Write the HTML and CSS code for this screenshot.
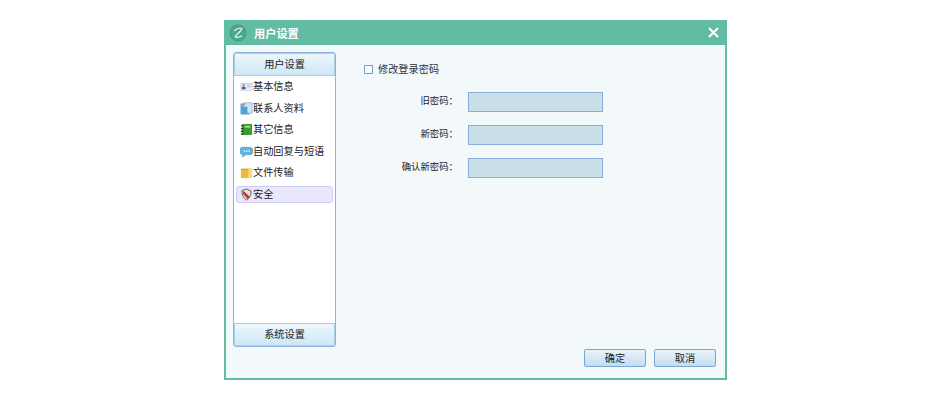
FILE: index.html
```html
<!DOCTYPE html>
<html lang="zh-CN">

<head>
  <meta charset="UTF-8" />
  <title>用户设置</title>
  <link rel="stylesheet" href="styles.css">
</head>

<body>
  <div class="dialog">
    <!-- Title bar -->
    <div class="titlebar">
      <svg class="logo" width="18" height="18" viewBox="0 0 18 18">
        <circle cx="9" cy="9" r="8.5" fill="#3f9c85" />
        <circle cx="9" cy="9" r="7.500" fill="#4ba88f" />
        <path d="M5.500 6.500C7.500 5 11 4 12.500 4.500C13.500 5.200 9.500 9 6.500 12C5.500 13.800 9 13.800 12.500 12" fill="none" stroke="#eef8f5" stroke-width="1.200" stroke-linecap="round" />
      </svg>
      <span class="title">用户设置</span>
      <svg class="close" width="11" height="11" viewBox="0 0 11 11">
        <path d="M1 1L10 10M10 1L1 10" stroke="#fff" stroke-width="2" />
      </svg>
    </div>

    <div class="content">
      <!-- Left menu -->
      <div class="sidebar">
        <div class="side-header">用户设置</div>
        <ul class="menu">
          <li class="menu-item">
            <svg class="icon" viewBox="0 0 14 14">
              <rect x="1" y="3.500" width="12" height="7.500" fill="#e8f0f7" stroke="#a9bccd" stroke-width=".6" />
              <circle cx="4" cy="6" r="1.300" fill="#c9744f" />
              <rect x="2" y="7.500" width="4" height="2.500" fill="#41679a" />
              <path d="M7.500 5.500h4M7.500 7.500h4" stroke="#b3c4d4" />
            </svg>
            基本信息
          </li>
          <li class="menu-item">
            <svg class="icon" viewBox="0 0 14 14">
              <rect x="1" y="2" width="9" height="11" fill="#6fb7e4" stroke="#3f8cc0" stroke-width=".6" />
              <rect x="4" y="1" width="9" height="11" fill="#cfe6f5" stroke="#5ba0cf" stroke-width=".6" />
              <rect x="1" y="5" width="7" height="8" fill="#4fa3d9" />
              <circle cx="4.500" cy="2.500" r="1.200" fill="#e08a3a" />
            </svg>
            联系人资料
          </li>
          <li class="menu-item">
            <svg class="icon" viewBox="0 0 14 14">
              <rect x="2" y="1" width="11" height="12" rx="1" fill="#3c9a35" />
              <rect x="5" y="3" width="6" height="2" fill="#a9dd7c" />
              <path d="M1 3h3M1 6h3M1 9h3M1 12h3" stroke="#1d4f1a" stroke-width="1.200" />
            </svg>
            其它信息
          </li>
          <li class="menu-item">
            <svg class="icon" viewBox="0 0 14 14">
              <path d="M4 2.500h6a3.500 3.500 0 0 1 0 8H6L3 13V10.300A3.500 3.500 0 0 1 4 2.500Z" fill="#5fb2e3" stroke="#3b8cc2" stroke-width=".6" />
              <path d="M4 6.500h1.500M6.500 6.500H8M9 6.500h1.500" stroke="#fff" stroke-width="1.400" />
            </svg>
            自动回复与短语
          </li>
          <li class="menu-item">
            <svg class="icon" viewBox="0 0 14 14">
              <rect x="1" y="3" width="12" height="10" fill="#f0b73c" />
              <rect x="9" y="2" width="4" height="11" fill="#f7d98a" />
              <path d="M1 3h8v1H1z" fill="#d9952a" />
            </svg>
            文件传输
          </li>
          <li class="menu-item selected">
            <svg class="icon" viewBox="0 0 14 14">
              <path d="M2 3L7 1L12 3.500C12 8 10 11 7 13C4 11 2 8 2 3Z" fill="#e9e4de" stroke="#4d4844" stroke-width=".9" />
              <path d="M3.500 3L10.500 9.500L8.500 12L3 6Z" fill="#b5382a" />
            </svg>
            安全
          </li>
        </ul>
        <div class="side-header">系统设置</div>
      </div>

      <!-- Password form -->
      <div class="panel">
        <label class="check-row"><span class="checkbox"></span><span class="check-text">修改登录密码</span></label>
        <div class="form">
          <div class="form-row"><span class="form-label">旧密码：</span><span class="field"></span></div>
          <div class="form-row"><span class="form-label">新密码：</span><span class="field"></span></div>
          <div class="form-row"><span class="form-label">确认新密码：</span><span class="field"></span></div>
        </div>
        <div class="buttons">
          <button class="btn">确定</button>
          <button class="btn">取消</button>
        </div>
      </div>
    </div>
  </div>
</body>

</html>
```

FILE: styles.css
```css
body {
  margin: 0;
  background-color: #fff;
  font-family: "Noto Sans CJK SC", "Liberation Sans", sans-serif;
  font-size: 10.200px;
  color: #222;
}

.dialog {
  box-sizing: border-box;
  width: 503px;
  height: 360px;
  margin: 20px 0 0 224px;
  border: 2px solid #62bca3;
  border-top: 0;
  display: flex;
  flex-direction: column;
}

/* Title bar */
.titlebar {
  height: 25px;
  flex: none;
  margin: 0 -2px;
  padding: 0 8px 0 5px;
  background-color: #62bca3;
  display: flex;
  align-items: center;
}

.logo {
  flex: none;
}

.title {
  margin-left: 7px;
  color: #fff;
  font-weight: bold;
  font-size: 11.200px;
}

.close {
  margin-left: auto;
}

/* Content area */
.content {
  flex: 1;
  display: flex;
  padding: 7px 9px 11px 7px;
  background-color: #f3f8fb;
  position: relative;
}

/* speckled band along the top of the window */
.content::before {
  content: "";
  position: absolute;
  top: 0;
  left: 0;
  right: 0;
  height: 55px;
  background-image:
    radial-gradient(circle, #e7ecef 0.6px, transparent 1px),
    radial-gradient(circle, #eaeff2 0.6px, transparent 1px);
  background-size: 23px 11px, 37px 17px;
  background-position: 0 2px, 5px 6px;
}

/* Left menu */
.sidebar {
  box-sizing: border-box;
  width: 103px;
  height: 295px;
  flex: none;
  border: 1px solid #8fb4dc;
  border-radius: 3px;
  background-color: #fff;
  display: flex;
  flex-direction: column;
  position: relative;
}

.side-header {
  box-sizing: border-box;
  height: 23px;
  flex: none;
  padding-bottom: 3px;
  border: 1px solid #a9cfe6;
  background: linear-gradient(#eef7fc, #cde7f6);
  display: flex;
  align-items: center;
  justify-content: center;
}

.menu {
  flex: 1;
  margin: 0;
  padding: 0 2px;
  list-style: none;
}

.menu-item {
  box-sizing: border-box;
  height: 17px;
  margin-top: 4.600px;
  padding: 0 0 2px 3px;
  border: 1px solid transparent;
  border-radius: 3px;
  display: flex;
  align-items: center;
  color: #222;
}

.menu-item:first-child {
  margin-top: 2px;
}

.menu-item.selected {
  background-color: #e9e7fb;
  border-color: #cfcbf3;
}

.icon {
  width: 13px;
  height: 13px;
  flex: none;
  position: relative;
  top: 1px;
}

/* Password form */
.panel {
  flex: 1;
  display: flex;
  flex-direction: column;
  padding-left: 28px;
  position: relative;
}

.check-row {
  display: flex;
  align-items: center;
  height: 20px;
  margin-top: 7px;
  color: #333;
}

.check-text {
  padding-bottom: 2px;
}

.checkbox {
  box-sizing: border-box;
  width: 9px;
  height: 9px;
  margin-right: 5px;
  border: 1px solid #6fa8cc;
  background-color: #f8fbfd;
}

.form {
  margin-top: 13px;
  display: flex;
  flex-direction: column;
  gap: 13px;
}

.form-row {
  display: flex;
  align-items: center;
}

.form-label {
  width: 94px;
  margin-right: 10px;
  padding-bottom: 4px;
  text-align: right;
  font-family: "Noto Sans CJK TC", sans-serif;
  font-size: 9.400px;
  color: #222;
}

.field {
  box-sizing: border-box;
  width: 135px;
  height: 20px;
  border: 1px solid #8aaedb;
  background-color: #cbdfe9;
}

.buttons {
  margin-top: auto;
  display: flex;
  justify-content: flex-end;
  gap: 8px;
}

.btn {
  box-sizing: border-box;
  width: 62px;
  height: 18px;
  padding: 0 0 3px;
  border: 1px solid #7ba6cf;
  border-radius: 2px;
  background: linear-gradient(#e9f3fa, #c5dcee);
  font-family: inherit;
  font-size: inherit;
  color: #222;
}
```
